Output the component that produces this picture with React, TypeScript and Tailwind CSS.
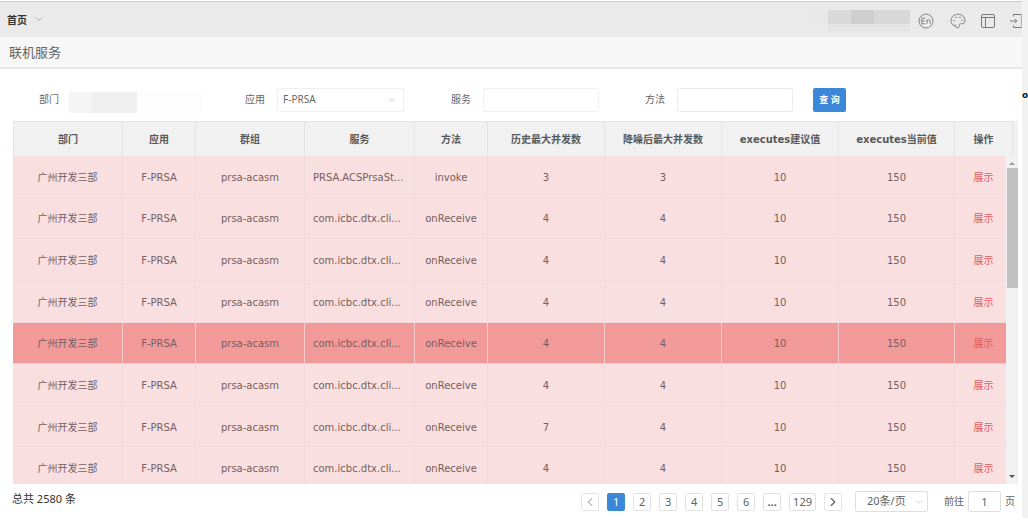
import React from 'react';
import { ChevronDown, ChevronLeft, ChevronRight } from 'lucide-react';

const COLUMNS = [
  { label: '部门', width: 'w-[11%]' },
  { label: '应用', width: 'w-[7.3%]' },
  { label: '群组', width: 'w-[10.9%]' },
  { label: '服务', width: 'w-[11%]' },
  { label: '方法', width: 'w-[7.3%]' },
  { label: '历史最大并发数', width: 'w-[11.7%]' },
  { label: '降噪后最大并发数', width: 'w-[11.7%]' },
  { label: 'executes建议值', width: 'w-[11.7%]' },
  { label: 'executes当前值', width: 'w-[11.6%]' },
  { label: '操作', width: 'w-[5.8%]' },
];

const ROWS = [
  { service: 'PRSA.ACSPrsaSt...', method: 'invoke', history: 3, denoised: 3 },
  { service: 'com.icbc.dtx.cli...', method: 'onReceive', history: 4, denoised: 4 },
  { service: 'com.icbc.dtx.cli...', method: 'onReceive', history: 4, denoised: 4 },
  { service: 'com.icbc.dtx.cli...', method: 'onReceive', history: 4, denoised: 4 },
  { service: 'com.icbc.dtx.cli...', method: 'onReceive', history: 4, denoised: 4, active: true },
  { service: 'com.icbc.dtx.cli...', method: 'onReceive', history: 4, denoised: 4 },
  { service: 'com.icbc.dtx.cli...', method: 'onReceive', history: 7, denoised: 4 },
  { service: 'com.icbc.dtx.cli...', method: 'onReceive', history: 4, denoised: 4 },
];

const PAGES = ['1', '2', '3', '4', '5', '6', '...', '129'];

const LanguageIcon: React.FC = () => (
  <svg width="16" height="16" viewBox="0 0 16 16" fill="none" stroke="currentColor" strokeWidth="0.9">
    <circle cx="8" cy="8" r="7" />
    <path d="M7.2 5.2H3.8v5.6h3.4M3.8 8h3M9 10.8V6.6M9 8c.4-1 1-1.3 1.7-1.3.9 0 1.4.6 1.4 1.5v2.6" />
  </svg>
);

const PaletteIcon: React.FC = () => (
  <svg width="16" height="16" viewBox="0 0 16 16" fill="none" stroke="currentColor" strokeWidth="0.9">
    <path d="M4.6 13.2C2.4 12.1 1 10.2 1 7.9 1 4.1 4.1 1.2 8 1.2s7 2.9 7 6.4c0 2-1.2 3.2-3 3.2h-1.4c-1 0-1.5.7-1.3 1.5.3 1.3-.2 2.5-1.5 2.5-1.4 0-2-.7-2-1.8 0-.9-.4-1.4-1-1.2-.5.2-.5.8-.2 1.4z" />
    <path d="M3 8.1c.2-.9 1.5-.9 1.7 0M5.2 4.9c.3-.9 1.6-.9 1.9 0M9 4.9c.3-.9 1.6-.9 1.9 0M11.4 7.6c.2-.9 1.5-.9 1.7 0" />
  </svg>
);

const LayoutIcon: React.FC = () => (
  <svg width="16" height="16" viewBox="0 0 16 16" fill="none" stroke="currentColor">
    <rect x="1.5" y="1.5" width="13" height="13" rx="1.5" />
    <path d="M1.5 4.5h13M5.5 4.5v10" />
  </svg>
);

const LogoutIcon: React.FC = () => (
  <svg width="12" height="16" viewBox="0 0 12 16" fill="none" stroke="currentColor">
    <path d="M3.5 3.5v-2h8M3.5 12.5v2h8M0 8h6.5M4.8 6 6.8 8l-2 2" />
    <path d="M11.5 1.5v13" stroke="#d9a679" />
  </svg>
);

const TopBar: React.FC = () => (
  <header className="mt-px flex h-9 items-center justify-between overflow-hidden border-t border-[#c9cccc] bg-[#eaeaea] pt-0.5 pl-[7px]">
    <button className="flex items-center gap-1.5 text-[10px] font-bold text-[#333]">
      首页
      <ChevronDown className="mb-1 h-3 w-3 text-[#aaa]" strokeWidth={2} />
    </button>
    <div className="flex items-center text-[#777]">
      {/* masked user name */}
      <div className="mr-2 flex h-[21px] flex-col">
        <div className="flex h-3.5">
          <span className="w-5 bg-[#e8e8e8]" />
          <span className="w-[23px] bg-[#d9d9d9]" />
          <span className="w-[23px] bg-[#cecece]" />
          <span className="w-9 bg-[#d8d8d8]" />
        </div>
        <div className="ml-5 h-[7px] bg-[#e4e4e5]" />
      </div>
      <button aria-label="En" className="mr-4"><LanguageIcon /></button>
      <button aria-label="Theme" className="mr-3.5"><PaletteIcon /></button>
      <button aria-label="Layout" className="mr-3.5"><LayoutIcon /></button>
      <button aria-label="Logout"><LogoutIcon /></button>
    </div>
  </header>
);

const FilterBar: React.FC = () => (
  <form className="grid grid-cols-[206fr_206fr_194fr_168fr_209fr] items-center pt-[17px] pl-[39px] text-[10px] text-[#666]">
    <div className="flex items-center gap-2.5">
      <span>部门</span>
      <div className="mt-1.5 flex h-[21px]">
        <span className="w-[23px] bg-[#f5f5f5]" />
        <span className="w-[45px] bg-[#efefef]" />
        <span className="w-[66px] bg-[#fdfdfd]" />
      </div>
    </div>
    <div className="flex items-center gap-3">
      <label htmlFor="app">应用</label>
      <div className="relative w-[127px]">
        <select id="app" defaultValue="F-PRSA" className="h-6 w-full appearance-none rounded-xs border border-[#f0f0f0] bg-white px-[5px] text-[10px] text-[#666]">
          <option>F-PRSA</option>
        </select>
        <ChevronDown className="pointer-events-none absolute top-[7px] right-[7px] h-2.5 w-2.5 text-[#bbb]" />
      </div>
    </div>
    <div className="flex items-center gap-3">
      <label htmlFor="service">服务</label>
      <input id="service" type="text" className="h-6 w-[116px] rounded-xs border border-[#f0f0f0] px-1.5" />
    </div>
    <div className="flex items-center gap-3">
      <label htmlFor="method">方法</label>
      <input id="method" type="text" className="h-6 w-[116px] rounded-xs border border-[#ebebeb] px-1.5" />
    </div>
    <button type="button" className="h-6 w-[33px] rounded-xs bg-[#3b87d8] text-[9px] font-bold text-white">
      查 询
    </button>
  </form>
);

const ServiceTable: React.FC = () => (
  <div className="relative mt-2 mr-1 ml-[13px] h-[363px] overflow-hidden bg-[#f1f1f1]">
    <div className="pr-[5px]">
      <table className="h-[368px] w-full table-fixed border-separate border-spacing-0 text-center text-[10px] text-[#755f61]">
        <thead>
          <tr className="h-[35px] text-[#58595a]">
            {COLUMNS.map((col) => (
              <th key={col.label} className={`${col.width} h-[35px] border-t border-r border-[#e2e3e3] bg-[#f1f1f1] p-0 font-bold first:border-l`}>
                {col.label}
              </th>
            ))}
          </tr>
        </thead>
        <tbody>
          {ROWS.map((row, i) => (
            <tr
              key={i}
              className={`*:border-r *:border-b *:px-0 *:pt-0.5 *:pb-0 ${
                row.active ? 'bg-[#f29a9a] *:border-[#f7caca]' : 'bg-[#f9dfe0] *:border-[#f3dadb]'
              }`}
            >
              <td>广州开发三部</td>
              <td>F-PRSA</td>
              <td>prsa-acasm</td>
              <td><div className="pl-2 text-left whitespace-nowrap">{row.service}</div></td>
              <td>{row.method}</td>
              <td>{row.history}</td>
              <td>{row.denoised}</td>
              <td>10</td>
              <td>150</td>
              <td><a href="#" className="text-[#e05c60]">展示</a></td>
            </tr>
          ))}
        </tbody>
      </table>
    </div>
    {/* scrollbar */}
    <div className="absolute top-[35px] right-0 bottom-0 flex w-3 flex-col items-center justify-between bg-[#f1f1f1] pb-1">
      <div className="flex w-full flex-col items-center">
        <svg width="6" height="12" viewBox="0 0 6 12" fill="#999"><path d="M0 9l3-3 3 3z" /></svg>
        <div className="ml-px h-[120px] w-[11px] bg-[#c1c1c1]" />
      </div>
      <svg width="6" height="8" viewBox="0 0 6 8" fill="#555"><path d="M0 3l3 3 3-3z" /></svg>
    </div>
  </div>
);

const Pagination: React.FC = () => (
  <footer className="flex justify-between pt-[7px] pr-[7px] pb-1.5 pl-3 text-[11px] text-[#606266]">
    <span className="text-[11px] leading-[15px] text-[#333]">总共 2580 条</span>
    <div className="flex h-[21px] items-center gap-2">
      <button aria-label="Previous" className="flex h-[18px] w-[18px] items-center justify-center rounded-xs border border-[#e6e6e6] text-[#bbb]">
        <ChevronLeft className="h-3.5 w-3.5 shrink-0" />
      </button>
      {PAGES.map((page) => (
        <button
          key={page}
          className={`h-[18px] min-w-[18px] rounded-xs border px-[3px] leading-4 ${
            page === '1' ? 'border-[#3b87d8] bg-[#3b87d8] text-white' : 'border-[#e2e2e2] bg-white'
          } ${page === '...' ? 'font-bold' : ''}`}
        >
          {page}
        </button>
      ))}
      <button aria-label="Next" className="flex h-[18px] w-[18px] items-center justify-center rounded-xs border border-[#e6e6e6]">
        <ChevronRight className="h-3.5 w-3.5 shrink-0" />
      </button>
      <div className="relative ml-[5px]">
        <select aria-label="每页条数" defaultValue="20条/页" className="block h-[21px] w-[73px] appearance-none rounded-xs border border-[#dedede] bg-white pl-[11px] text-[11px]">
          <option>20条/页</option>
        </select>
        <ChevronDown className="pointer-events-none absolute top-[6px] right-1 h-2.5 w-2.5 text-[#ccc]" />
      </div>
      <label className="ml-2 flex items-center gap-1 text-[10px]">
        前往
        <input type="text" defaultValue="1" className="h-[21px] w-[33px] rounded-xs border border-[#dedede] text-center text-[11px]" />
        页
      </label>
    </div>
  </footer>
);

export default function App() {
  return (
    <div className="flex bg-white font-['DejaVu_Sans','Noto_Sans_CJK_SC',sans-serif]">
      <main className="min-w-0 flex-1 overflow-hidden">
        <div className="font-['Noto_Sans','Noto_Sans_CJK_SC',sans-serif]">
          <TopBar />
          <h1 className="h-8 border-b-2 border-[#e8e8e8] bg-[#f7f7f7] pl-[9px] text-[13px] leading-[30px] text-[#666]">
            联机服务
          </h1>
          <FilterBar />
        </div>
        <ServiceTable />
        <div className="font-['Noto_Sans','Noto_Sans_CJK_SC',sans-serif]">
          <Pagination />
        </div>
      </main>
      {/* edge of the neighbouring panel */}
      <aside className="w-[6px] bg-[#f2f2f2] pt-[87px]">
        <span className="block text-[9px] leading-4 font-bold text-[#0b1526]">o</span>
      </aside>
    </div>
  );
}
